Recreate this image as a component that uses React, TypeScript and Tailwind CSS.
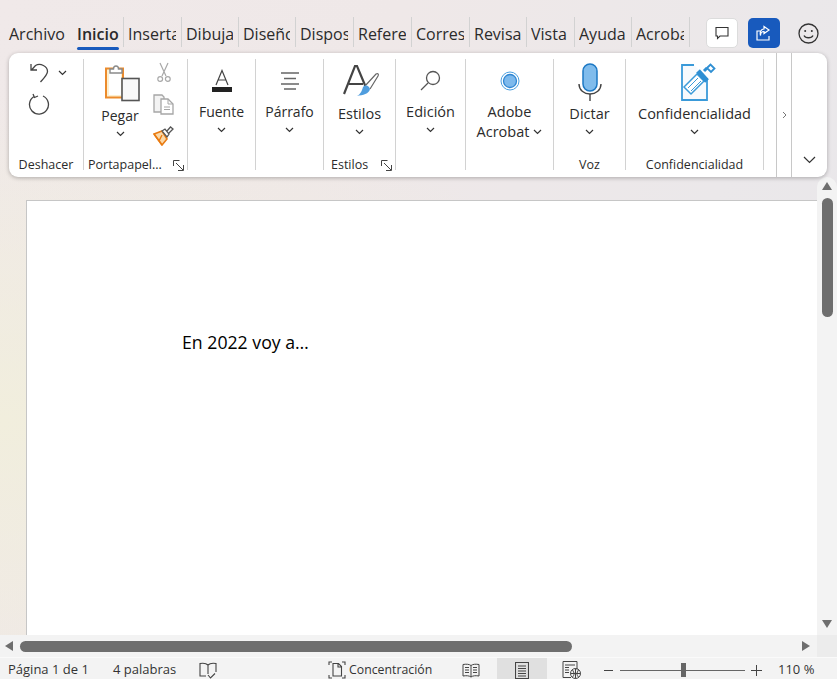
import type { ReactNode } from 'react';

const FONT = 'font-["Open_Sans","Noto_Sans",sans-serif]';

const TABS = [
  { label: 'Insertar', width: 'w-[58px]' },
  { label: 'Dibujar', width: 'w-[57px]' },
  { label: 'Diseño', width: 'w-[57px]' },
  { label: 'Disposición', width: 'w-[58px]' },
  { label: 'Referencias', width: 'w-[58px]' },
  { label: 'Correspondencia', width: 'w-[58px]' },
  { label: 'Revisar', width: 'w-[57px]' },
  { label: 'Vista', width: 'w-[48px]' },
  { label: 'Ayuda', width: 'w-[57px]' },
  { label: 'Acrobat', width: 'w-[58px]' },
];

function Chevron({ className = '' }: { className?: string }) {
  return (
    <svg width="9" height="6" viewBox="0 0 9 6" className={className}>
      <path d="M1 1l3.500 3.500L8 1" fill="none" stroke="#333" strokeWidth="1.200" />
    </svg>
  );
}

function Launcher() {
  return (
    <svg width="11" height="11" viewBox="0 0 11 11" className="absolute bottom-[-1px] right-[3px]">
      <path d="M.5 6V.5h6M3 3l7 7M10.500 5v5.500H5" fill="none" stroke="#444" strokeWidth="1" />
    </svg>
  );
}

function Group({
  width,
  label,
  labelClass = '',
  launcher,
  children,
}: {
  width: string;
  label?: string;
  labelClass?: string;
  launcher?: boolean;
  children: ReactNode;
}) {
  return (
    <div className={`relative flex h-[111px] shrink-0 flex-col items-center border-r border-[#d2d2d2] ${width}`}>
      <div className="flex w-full flex-1 flex-col items-center">{children}</div>
      {label && <div className={`-mb-[3px] text-[12.5px] leading-[16px] text-[#2b2b2b] ${labelClass}`}>{label}</div>}
      {launcher && <Launcher />}
    </div>
  );
}

function Big({
  iconClass,
  icon,
  label,
  labelClass = 'text-[14.5px]',
}: {
  iconClass: string;
  icon: ReactNode;
  label: ReactNode;
  labelClass?: string;
}) {
  return (
    <div className="flex flex-col items-center">
      <div className={`flex justify-center ${iconClass}`}>{icon}</div>
      <div className={`leading-[20px] text-[#2b2b2b] ${labelClass}`}>{label}</div>
      <Chevron className="mt-[5px]" />
    </div>
  );
}

function PasteIcon() {
  return (
    <svg width="40" height="39" viewBox="-4 0 40 39">
      <rect x="2" y="5.500" width="17" height="29" fill="#fdf0cf" stroke="#ec8b2c" strokeWidth="2" />
      <rect x="5" y="8" width="12" height="24" fill="#fff" />
      <path d="M6 10V6h3.500c0-4 5-4 5 0H18v4z" fill="#fff" stroke="#8a8a8a" strokeWidth="1.400" />
      <rect x="18" y="15.500" width="17" height="22" fill="#f9f9f9" stroke="#555" strokeWidth="1.600" />
    </svg>
  );
}

function ScissorsIcon() {
  return (
    <svg width="14" height="21" viewBox="0 0 14 21" fill="none" stroke="#a8a8a8" strokeWidth="1.200">
      <path d="M3 1l6 13M11 1L5 14" />
      <circle cx="3.200" cy="17" r="2.400" />
      <circle cx="10.800" cy="17" r="2.400" />
    </svg>
  );
}

function CopyIcon() {
  return (
    <svg width="21" height="21" viewBox="0 0 21 21" fill="none">
      <path d="M1 1h8l2 2v15H1z" fill="#f3f3f3" stroke="#a6a6a6" strokeWidth="1.300" />
      <path d="M8 5h7l5 5v10H8z" fill="#fff" stroke="#a6a6a6" strokeWidth="1.300" />
      <path d="M15 5v5h5M11 13h6M11 15.500h6" stroke="#a6a6a6" strokeWidth="1" />
    </svg>
  );
}

function PainterIcon() {
  return (
    <svg width="21" height="20" viewBox="0 0 21 20" fill="none">
      <path d="M1 8l8-3 5 8-5 6z" fill="#fbd9a8" stroke="#e97b12" strokeWidth="1.600" />
      <path d="M9 9l-3 6M1 8l8 11" stroke="#e97b12" strokeWidth="1.400" />
      <path d="M9 5l3-2 4 5-2 3zM14 5l3.500-4 2.500 2-4 4" fill="#fff" stroke="#555" strokeWidth="1.300" />
    </svg>
  );
}

function App() {
  return (
    <div
      className={`flex h-[679px] w-[837px] flex-col overflow-hidden bg-[radial-gradient(ellipse_at_0%_62%,#f1eedd_0%,rgba(241,238,221,0)_55%),linear-gradient(115deg,#f0e9e9_0%,#efe8e8_35%,#ebe8ea_70%,#e7e6ea_100%)] ${FONT}`}
    >
      <div className="relative flex h-[53px] shrink-0 items-start pl-[9px] pt-[17px] text-[16px] leading-[34px] text-[#2b2b2b]">
        <div className="h-[30px] w-[68px] shrink-0">Archivo</div>
        <div className="relative h-[30px] w-[47px] shrink-0 border-r border-[#d2d2d2] font-semibold">
          <span>Inicio</span>
          <div className="absolute -bottom-[3px] left-0 h-[3px] w-[42px] rounded-sm bg-[#185abd]" />
        </div>
        {TABS.map((t) => (
          <div key={t.label} className={`h-[30px] shrink-0 border-r border-[#d2d2d2] pl-[4px] pr-[5px] ${t.width}`}>
            <div className="overflow-hidden whitespace-nowrap">{t.label}</div>
          </div>
        ))}
        <div className="ml-[16px] mt-[1px] flex h-[30px] w-[32px] shrink-0 items-center justify-center rounded-[5px] border border-[#dcdcdc] bg-white">
          <svg width="14" height="14" viewBox="0 0 14 14" fill="none" stroke="#333" strokeWidth="1.100">
            <path d="M1 1.500h12v8.500H5L2.500 12.500V10H1z" />
          </svg>
        </div>
        <div className="ml-[10px] mt-[1px] flex h-[30px] w-[32px] shrink-0 items-center justify-center rounded-[5px] bg-[#185abd]">
          <svg width="16" height="16" viewBox="0 0 16 16" fill="none" stroke="#fff" strokeWidth="1.200">
            <path d="M4.500 6H1v9h12v-4M8 1.500l5 3.500-5 3.500V6.500C6 6.500 4.500 8 4.500 10.500 3.500 7 5 4 8 4z" />
          </svg>
        </div>
        <div className="ml-[18px] mt-[6px] shrink-0">
          <svg width="21" height="21" viewBox="0 0 21 21" fill="none" stroke="#333" strokeWidth="1.300">
            <circle cx="10.500" cy="10.500" r="9.500" />
            <circle cx="7.200" cy="8" r="1" fill="#333" stroke="none" />
            <circle cx="13.800" cy="8" r="1" fill="#333" stroke="none" />
            <path d="M6 12.500c1.500 3 7.500 3 9 0" />
          </svg>
        </div>
      </div>

      <div className="z-10 ml-[9px] flex h-[124px] w-[818px] shrink-0 rounded-[9px] bg-white text-[#2b2b2b] shadow-[0_1px_4px_rgba(0,0,0,0.28)]">
        <div className="mt-[6px] flex h-[111px]">
          <Group width="w-[75px]" label="Deshacer">
            <div className="flex items-center pl-[5px] pt-[3px]">
              <svg width="20" height="21" viewBox="0 0 20 21" fill="none" stroke="#444" strokeWidth="1.300">
                <path d="M1 2v6h6M1.500 8l4-4.500c5-3 12 1 12 6 0 3-2 5-7 10.500" />
              </svg>
              <Chevron className="ml-[8px]" />
            </div>
            <div className="-ml-[14px] mt-[10px]">
              <svg width="22" height="22" viewBox="0 0 22 22" fill="none" stroke="#444" strokeWidth="1.300">
                <path d="M15 3A9.500 9.500 0 1 1 6 3.500M5 1l1.500 3.500L10 3" />
              </svg>
            </div>
          </Group>
          <Group width="w-[104px]" label="Portapapel..." labelClass="self-start pl-[4px]" launcher>
            <div className="flex w-full flex-1 pl-[16px] pt-[4px]">
              <Big iconClass="h-[43px]" icon={<PasteIcon />} label="Pegar" labelClass="text-[14px]" />
              <div className="-mt-[1px] ml-[13px] flex flex-col items-center gap-[11px]">
                <ScissorsIcon />
                <CopyIcon />
                <PainterIcon />
              </div>
            </div>
          </Group>
          <Group width="w-[68px]">
            <Big
              iconClass="h-[43px] items-center"
              labelClass="text-[14px]"
              icon={
                <svg width="20" height="24" viewBox="0 0 20 24">
                  <path d="M4 16L10 1.500 16 16M6 11h8" fill="none" stroke="#444" strokeWidth="1.200" />
                  <rect y="18" width="20" height="5" fill="#222" />
                </svg>
              }
              label="Fuente"
            />
          </Group>
          <Group width="w-[68px]">
            <Big
              iconClass="h-[43px] items-center"
              labelClass="text-[14px]"
              icon={
                <svg width="18" height="18" viewBox="0 0 18 18" fill="none" stroke="#666" strokeWidth="1.300">
                  <path d="M0 1h18M3 6.500h12M0 12h18M3 17h12" />
                </svg>
              }
              label="Párrafo"
            />
          </Group>
          <Group width="w-[72px]" label="Estilos" labelClass="self-start pl-[7px]" launcher>
            <Big
              iconClass="h-[45px] items-center pl-[4px]"
              icon={
                <svg width="38" height="36" viewBox="0 0 38 36" fill="none">
                  <path d="M1 30L12 2h2l10 24M6 20h14" stroke="#444" strokeWidth="2.200" />
                  <path d="M22 22l11-12c2-1 3 0 2 2l-8 13" fill="#fff" stroke="#666" strokeWidth="1.200" />
                  <path d="M20 23c3-3 6-1 7 2-1 5-7 6-13 7 4-2 5-6 6-9z" fill="#4f9dde" />
                </svg>
              }
              label="Estilos"
            />
          </Group>
          <Group width="w-[70px]">
            <Big
              iconClass="h-[43px] items-center"
              icon={
                <svg width="21" height="21" viewBox="0 0 21 21" fill="none" stroke="#555" strokeWidth="1.300">
                  <circle cx="13" cy="8" r="6.500" />
                  <path d="M8 13l-7 7" />
                </svg>
              }
              label="Edición"
            />
          </Group>
          <Group width="w-[88px]">
            <div className="flex h-[43px] items-center justify-center">
              <svg width="20" height="20" viewBox="0 0 20 20">
                <circle cx="10" cy="10" r="9" fill="none" stroke="#4a9fe0" strokeWidth="1" />
                <circle cx="10" cy="10" r="6.500" fill="#7db9ec" stroke="#2f86d2" strokeWidth="1.300" />
              </svg>
            </div>
            <div className="text-center text-[14.5px] leading-[20px]">
              Adobe
              <div className="flex items-center gap-[4px]">
                Acrobat
                <Chevron />
              </div>
            </div>
          </Group>
          <Group width="w-[72px]" label="Voz">
            <Big
              iconClass="h-[45px] items-center"
              icon={
                <svg width="24" height="38" viewBox="0 0 24 38" fill="none">
                  <rect x="5" y="1" width="14" height="27" rx="7" fill="#80bcec" stroke="#1c78c4" strokeWidth="1.500" />
                  <path d="M1 21c0 6 5 10 11 10s11-4 11-10" stroke="#444" strokeWidth="1.400" />
                  <path d="M12 31v7" stroke="#444" strokeWidth="1.400" />
                </svg>
              }
              label="Dictar"
            />
          </Group>
          <Group width="w-[138px]" label="Confidencialidad">
            <Big
              iconClass="h-[45px] items-center pl-[8px]"
              icon={
                <svg width="35" height="38" viewBox="0 0 35 38" fill="none">
                  <path d="M13 2H1v35h25V15" fill="#f7fafd" stroke="#3a9ad9" strokeWidth="1.800" />
                  <path d="M3 24L16 11l7 7-13 13z" fill="#fff" stroke="#3a9ad9" strokeWidth="1.500" />
                  <path d="M7 25l10-10M10 28l10-10" stroke="#3a9ad9" strokeWidth="1" />
                  <path d="M17 8l9 10" stroke="#2f8fd3" strokeWidth="5" />
                  <path d="M23 8l3-3" stroke="#2f8fd3" strokeWidth="3" />
                  <path d="M26 5l3.500-3.500 4 4L30 9z" fill="#fff" stroke="#2f8fd3" strokeWidth="1.800" />
                </svg>
              }
              label="Confidencialidad"
            />
          </Group>
        </div>
        <div className="ml-[12px] flex h-full w-[16px] shrink-0 items-center justify-center border-x border-[#c8c8c8]">
          <svg width="5" height="8" viewBox="0 0 5 8">
            <path d="M1 1l3 3-3 3" fill="none" stroke="#777" strokeWidth="1" />
          </svg>
        </div>
        <div className="flex flex-1 items-end justify-center pb-[13px]">
          <svg width="13" height="8" viewBox="0 0 13 8">
            <path d="M1 1l5.500 5.500L12 1" fill="none" stroke="#333" strokeWidth="1.200" />
          </svg>
        </div>
      </div>

      <div className="flex min-h-0 flex-1">
        <div className="flex-1 pl-[26px] pt-[23px]">
          <div className="h-full border-l border-t border-[#c6c6c6] bg-white pl-[155px] pt-[129px] text-[17.7px] leading-[24px] text-black">
            En 2022 voy a…
          </div>
        </div>
        <div className="flex w-[20px] shrink-0 flex-col items-center rounded-t-[10px] bg-[#f3f3f3] pt-[5px]">
          <div className="h-0 w-0 border-x-[5px] border-b-[8px] border-x-transparent border-b-[#6e6e6e]" />
          <div className="mt-[8px] h-[119px] w-[11px] rounded-[6px] bg-[#6e6e6e]" />
          <div className="mt-auto mb-[7px] h-0 w-0 border-x-[5px] border-t-[8px] border-x-transparent border-t-[#6e6e6e]" />
        </div>
      </div>

      <div className="flex h-[22px] shrink-0 items-center bg-[#f3f3f3]">
        <div className="ml-[5px] h-0 w-0 border-y-[5px] border-r-[8px] border-y-transparent border-r-[#6e6e6e]" />
        <div className="ml-[7px] h-[11px] w-[552px] rounded-[6px] bg-[#6e6e6e]" />
        <div className="ml-[230px] h-0 w-0 border-y-[5px] border-l-[8px] border-y-transparent border-l-[#6e6e6e]" />
        <div className="ml-[7px] h-full flex-1 bg-[#ececec]" />
      </div>

      <div className="flex h-[22px] shrink-0 items-center border-t border-[#fafafa] bg-[#f3f3f3] pl-[8px] pt-[3px] text-[13px] text-[#333]">
        <span className="w-[105px] shrink-0">Página 1 de 1</span>
        <span className="w-[86px] shrink-0">4 palabras</span>
        <svg width="18" height="17" viewBox="0 0 18 17" fill="none" stroke="#444" strokeWidth="1.100" className="shrink-0">
          <path d="M9 3C7 1 4 1 1 1.500V14h6M9 3c2-2 5-2 8-1.500V10M9 3v9" />
          <path d="M9 13l2.500 3L16 11.500" />
        </svg>
        <svg width="18" height="18" viewBox="0 0 18 18" fill="none" stroke="#444" strokeWidth="1.100" className="ml-[111px] shrink-0">
          <path d="M1 4V1h3M14 1h3v3M1 14v3h3M14 17h3v-3" />
          <path d="M5 2.500h5.500l3 3V15H5zM10 3v3h3" />
        </svg>
        <span className="ml-[3px] w-[113px] shrink-0 whitespace-nowrap text-[12.3px]">Concentración</span>
        <svg width="18" height="15" viewBox="0 0 18 15" fill="none" stroke="#444" strokeWidth="1" className="shrink-0">
          <path d="M9 2.500C7 1 4 1 1 1.500V13c3-.5 6-.5 8 1 2-1.500 5-1.500 8-1V1.500C14 1 11 1 9 2.500zM9 2.500V14M3 4.500h4M3 7h4M3 9.500h4M11 4.500h4M11 7h4M11 9.500h4" />
        </svg>
        <div className="-mt-[3px] ml-[17px] flex h-[21px] w-[50px] shrink-0 items-center justify-center bg-[#e0e0e0] pt-[3px]">
          <svg width="14" height="17" viewBox="0 0 14 17" fill="none" stroke="#444" strokeWidth="1.100" className="shrink-0">
            <path d="M.5.500h13v16H.5zM3 4h8M3 6.500h8M3 9h8M3 11.500h8M3 14h8" />
          </svg>
        </div>
        <svg width="19" height="18" viewBox="0 0 19 18" fill="none" stroke="#444" strokeWidth="1" className="ml-[15px] shrink-0">
          <path d="M9 16.500H1V.500h14v8M3 4h10M3 6.500h4M3 9h4M3 11.500h4" />
          <circle cx="13.500" cy="12.500" r="5" />
          <path d="M8.500 12.500h10M13.500 7.500v10M10.500 9c2 3 2 5 0 7M16.500 9c-2 3-2 5 0 7" />
        </svg>
        <div className="ml-[23px] h-[1px] w-[9px] shrink-0 bg-[#444]" />
        <div className="relative ml-[7px] h-[1px] w-[125px] shrink-0 bg-[#666]">
          <div className="absolute left-[61px] top-[-7px] h-[14px] w-[5px] bg-[#666]" />
        </div>
        <div className="relative ml-[6px] h-[1px] w-[11px] shrink-0 bg-[#444]">
          <div className="absolute left-[5px] top-[-5px] h-[11px] w-[1px] bg-[#444]" />
        </div>
        <span className="ml-[16px] shrink-0 whitespace-nowrap">110 %</span>
      </div>
    </div>
  );
}

export default App;
